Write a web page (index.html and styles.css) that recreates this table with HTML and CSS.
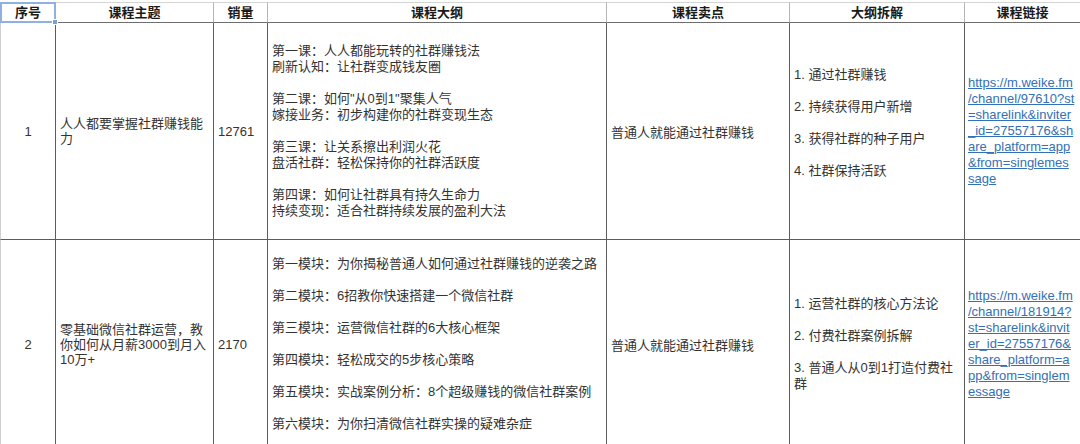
FILE: index.html
```html
<!DOCTYPE html>
<html lang="zh-CN">
<head>
<meta charset="utf-8">
<title>课程表</title>
<link rel="stylesheet" href="styles.css">
</head>
<body>
<div class="sheet">
  <div class="hd first selected">序号</div>
  <div class="hd">课程主题</div>
  <div class="hd">销量</div>
  <div class="hd">课程大纲</div>
  <div class="hd">课程卖点</div>
  <div class="hd">大纲拆解</div>
  <div class="hd">课程链接</div>

  <div class="cell first center">1</div>
  <div class="cell"><div class="tight">人人都要掌握社群赚钱能<br>力</div></div>
  <div class="cell"><div>12761</div></div>
  <div class="cell"><div class="lines">第一课：人人都能玩转的社群赚钱法<br>刷新认知：让社群变成钱友圈<br><br>第二课：如何"从0到1"聚集人气<br>嫁接业务：初步构建你的社群变现生态<br><br>第三课：让关系擦出利润火花<br>盘活社群：轻松保持你的社群活跃度<br><br>第四课：如何让社群具有持久生命力<br>持续变现：适合社群持续发展的盈利大法</div></div>
  <div class="cell"><div>普通人就能通过社群赚钱</div></div>
  <div class="cell"><div class="lines">1. 通过社群赚钱<br><br>2. 持续获得用户新增<br><br>3. 获得社群的种子用户<br><br>4. 社群保持活跃<br>&nbsp;</div></div>
  <div class="cell link"><a class="lines" href="#">https://m.weike.fm<br>/channel/97610?st<br>=sharelink&amp;inviter<br>_id=27557176&amp;sh<br>are_platform=app<br>&amp;from=singlemes<br>sage</a></div>

  <div class="cell first center tall">2</div>
  <div class="cell tall"><div class="tight">零基础微信社群运营，教<br>你如何从月薪3000到月入<br>10万+</div></div>
  <div class="cell tall"><div>2170</div></div>
  <div class="cell tall"><div class="lines">第一模块：为你揭秘普通人如何通过社群赚钱的逆袭之路<br><br>第二模块：6招教你快速搭建一个微信社群<br><br>第三模块：运营微信社群的6大核心框架<br><br>第四模块：轻松成交的5步核心策略<br><br>第五模块：实战案例分析：8个超级赚钱的微信社群案例<br><br>第六模块：为你扫清微信社群实操的疑难杂症</div></div>
  <div class="cell tall"><div>普通人就能通过社群赚钱</div></div>
  <div class="cell tall"><div class="lines">1. 运营社群的核心方法论<br><br>2. 付费社群案例拆解<br><br>3. 普通人从0到1打造付费社<br>群</div></div>
  <div class="cell tall link"><a class="lines" href="#">https://m.weike.fm<br>/channel/181914?<br>st=sharelink&amp;invit<br>er_id=27557176&amp;<br>share_platform=a<br>pp&amp;from=singlem<br>essage</a></div>
</div>
</body>
</html>
```

FILE: styles.css
```css
html, body {
  margin: 0;
  padding: 0;
  background: #ffffff;
  overflow: hidden;
}

body {
  width: 1080px;
  height: 444px;
  font-family: "Liberation Sans", "Noto Sans CJK SC", sans-serif;
  font-size: 13px;
  color: #333333;
}

.sheet {
  margin-top: 2px;
  display: grid;
  grid-template-columns: 56px 158px 54px 339px 183px 175px 116px;
  grid-template-rows: 21px 217px 208px;
  width: 1081px;
}

.hd {
  box-sizing: border-box;
  border-top: 1px solid #d4d4d4;
  border-right: 1px solid #b5b5b5;
  border-bottom: 1px solid #6e6e6e;
  font-weight: bold;
  color: #1a1a1a;
  text-align: center;
  line-height: 19px;
  white-space: nowrap;
}

.hd.first {
  border-left: 1px solid #d0d0d0;
}

.selected {
  position: relative;
}

.selected::before {
  content: "";
  position: absolute;
  left: -1px;
  top: -1px;
  right: -1px;
  bottom: -1px;
  border: 2px solid #8fb0e2;
  pointer-events: none;
}

.selected::after {
  content: "";
  position: absolute;
  right: -3px;
  bottom: -3px;
  width: 4px;
  height: 4px;
  background: #7f9fd6;
  border: 1px solid #ffffff;
}

.cell {
  box-sizing: border-box;
  border-right: 1px solid #5c5c5c;
  border-bottom: 1px solid #5c5c5c;
  padding: 0 4px;
  display: flex;
  align-items: center;
  white-space: nowrap;
  overflow: hidden;
}

.cell.first {
  border-left: 1px solid #d0d0d0;
}

.cell.center {
  justify-content: center;
}

.cell.tall {
  border-bottom: none;
}

.lines {
  line-height: 16px;
}

.tight {
  line-height: 15px;
}

.link {
  padding-left: 3px;
}

.link a {
  color: #3470b5;
  text-decoration: underline;
  display: block;
}
```
